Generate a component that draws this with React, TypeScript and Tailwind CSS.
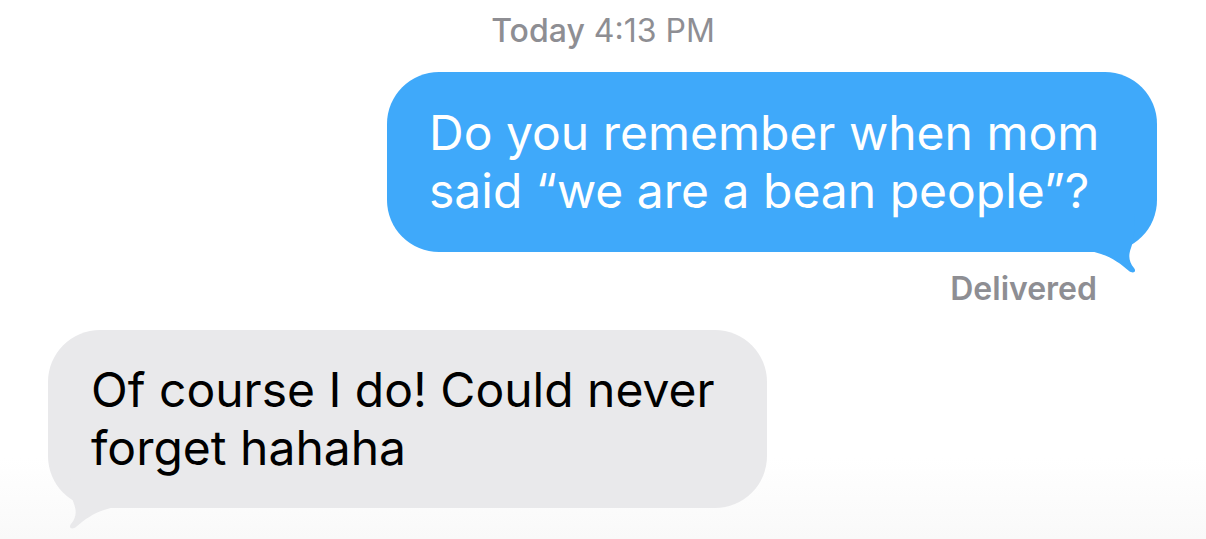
import React from 'react';

const font = { fontFamily: 'Inter, "Noto Sans", sans-serif' };

function BlueTail() {
  return (
    <svg className="absolute right-[18px] bottom-[-22px]" width="48" height="60" viewBox="0 0 48 60">
      <path d="M0 37 L10 40 C22 44 30 50 38 57 C42 60 46 58 43 54 C38 48 37 42 40 34 C43 26 44 14 44 0 L0 0 Z" fill="#3fa9fa" />
    </svg>
  );
}

function GrayTail() {
  return (
    <svg className="absolute left-[18px] bottom-[-22px]" width="48" height="60" viewBox="0 0 48 60">
      <path d="M48 37 L38 40 C26 44 18 50 10 57 C6 60 2 58 5 54 C10 48 11 42 8 34 C5 26 4 14 4 0 L48 0 Z" fill="#e9e9eb" />
    </svg>
  );
}

export default function App() {
  return (
    <div className="w-[1206px] h-[539px] overflow-hidden bg-gradient-to-b from-white from-85% to-[#f9f9f9]" style={font}>
      <div className="flex flex-col">
        <div className="pt-[11px] text-center text-[32px] leading-[40px] text-[#8e8e93]">
          <span className="font-medium">Today</span> 4:13 PM
        </div>

        <div className="mt-[21px] flex justify-end pr-[49px]">
          <div className="relative w-[770px] h-[180px] rounded-[52px] bg-[#3fa9fa] pl-[42px] pt-[32px] text-[48px] leading-[58px] text-white">
            <p className="relative z-10">Do you remember when mom<br />said “we are a bean people”?</p>
            <BlueTail />
          </div>
        </div>

        <div className="mt-[17px] flex justify-end pr-[109px] text-[32px] leading-[40px] font-semibold text-[#8e8e93]">
          Delivered
        </div>

        <div className="mt-[21px] flex pl-[48px]">
          <div className="relative w-[719px] h-[178px] rounded-[52px] bg-[#e9e9eb] pl-[43px] pt-[31px] text-[48px] leading-[58px] text-black">
            <p className="relative z-10">Of course I do! Could never<br />forget hahaha</p>
            <GrayTail />
          </div>
        </div>
      </div>
    </div>
  );
}
